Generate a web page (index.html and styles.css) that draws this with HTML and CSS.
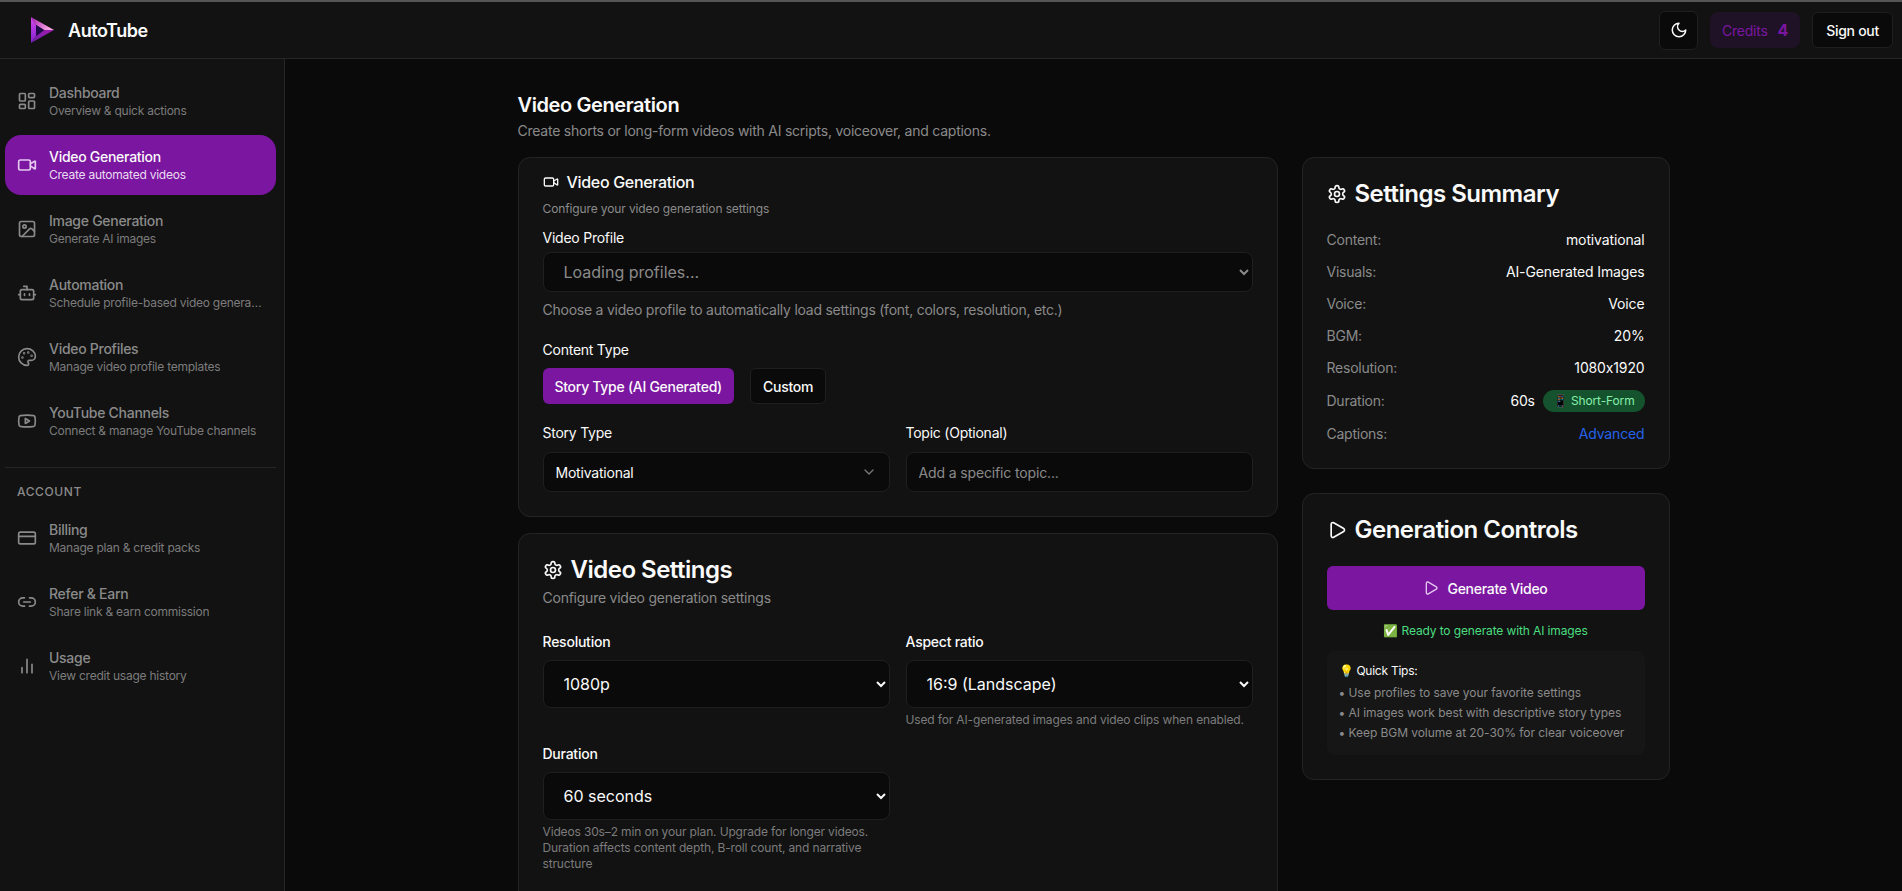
FILE: index.html
```html
<!DOCTYPE html>
<html lang="en">
<head>
<meta charset="utf-8">
<title>AutoTube</title>
<link rel="stylesheet" href="styles.css">
</head>
<body>
<svg class="sprite" aria-hidden="true">
  <symbol id="i-dash" viewBox="0 0 24 24"><rect x="3" y="3" width="7" height="9" rx="1"/><rect x="14" y="3" width="7" height="5" rx="1"/><rect x="14" y="12" width="7" height="9" rx="1"/><rect x="3" y="16" width="7" height="5" rx="1"/></symbol>
  <symbol id="i-video" viewBox="0 0 24 24"><path d="m16 13 5.223 3.482a.5.5 0 0 0 .777-.416V7.87a.5.5 0 0 0-.752-.432L16 10.5"/><rect x="2" y="6" width="14" height="12" rx="2"/></symbol>
  <symbol id="i-image" viewBox="0 0 24 24"><rect x="3" y="3" width="18" height="18" rx="2"/><circle cx="9" cy="9" r="2"/><path d="m21 15-3.086-3.086a2 2 0 0 0-2.828 0L6 21"/></symbol>
  <symbol id="i-bot" viewBox="0 0 24 24"><path d="M12 8V4H8"/><rect x="4" y="8" width="16" height="12" rx="2"/><path d="M2 14h2M20 14h2M15 13v2M9 13v2"/></symbol>
  <symbol id="i-palette" viewBox="0 0 24 24"><path d="M12 22a1 1 0 0 1 0-20 10 9 0 0 1 10 9 5 5 0 0 1-5 5h-2.25a1.75 1.75 0 0 0-1.4 2.8l.3.4a1.75 1.75 0 0 1-1.4 2.8z"/><circle cx="13.5" cy="6.5" r=".5"/><circle cx="17.5" cy="10.5" r=".5"/><circle cx="6.5" cy="12.5" r=".5"/><circle cx="8.5" cy="7.5" r=".5"/></symbol>
  <symbol id="i-yt" viewBox="0 0 24 24"><path d="M2.5 17a24.12 24.12 0 0 1 0-10 2 2 0 0 1 1.4-1.4 49.56 49.56 0 0 1 16.2 0A2 2 0 0 1 21.5 7a24.12 24.12 0 0 1 0 10 2 2 0 0 1-1.4 1.4 49.55 49.55 0 0 1-16.2 0A2 2 0 0 1 2.5 17"/><path d="m10 15 5-3-5-3z"/></symbol>
  <symbol id="i-card" viewBox="0 0 24 24"><rect x="2" y="5" width="20" height="14" rx="2"/><path d="M2 10h20"/></symbol>
  <symbol id="i-link" viewBox="0 0 24 24"><path d="M9 17H7A5 5 0 0 1 7 7h2"/><path d="M15 7h2a5 5 0 1 1 0 10h-2"/><path d="M8 12h8"/></symbol>
  <symbol id="i-chart" viewBox="0 0 24 24"><path d="M18 20V10M12 20V4M6 20v-6"/></symbol>
  <symbol id="i-moon" viewBox="0 0 24 24"><path d="M12 3a6 6 0 0 0 9 9 9 9 0 1 1-9-9Z"/></symbol>
  <symbol id="i-gear" viewBox="0 0 24 24"><path d="M12.22 2h-.44a2 2 0 0 0-2 2v.18a2 2 0 0 1-1 1.73l-.43.25a2 2 0 0 1-2 0l-.15-.08a2 2 0 0 0-2.73.73l-.22.38a2 2 0 0 0 .73 2.73l.15.1a2 2 0 0 1 1 1.72v.51a2 2 0 0 1-1 1.74l-.15.09a2 2 0 0 0-.73 2.73l.22.38a2 2 0 0 0 2.73.73l.15-.08a2 2 0 0 1 2 0l.43.25a2 2 0 0 1 1 1.73V20a2 2 0 0 0 2 2h.44a2 2 0 0 0 2-2v-.18a2 2 0 0 1 1-1.73l.43-.25a2 2 0 0 1 2 0l.15.08a2 2 0 0 0 2.73-.73l.22-.39a2 2 0 0 0-.73-2.73l-.15-.08a2 2 0 0 1-1-1.74v-.5a2 2 0 0 1 1-1.74l.15-.09a2 2 0 0 0 .73-2.73l-.22-.38a2 2 0 0 0-2.73-.73l-.15.08a2 2 0 0 1-2 0l-.43-.25a2 2 0 0 1-1-1.73V4a2 2 0 0 0-2-2z"/><circle cx="12" cy="12" r="3"/></symbol>
  <symbol id="i-play" viewBox="0 0 24 24"><path d="M5 5a2 2 0 0 1 3.008-1.728l11.997 6.998a2 2 0 0 1 .003 3.458l-12 7A2 2 0 0 1 5 19z"/></symbol>
  <symbol id="i-chev" viewBox="0 0 24 24"><path d="m6 9 6 6 6-6"/></symbol>
</svg>
<div class="topline"></div>
<header class="topbar">
  <div class="brand">
    <svg class="logo" viewBox="0 0 25 26">
      <defs>
        <linearGradient id="lgTop" x1="0" y1="0" x2="1" y2="0.4"><stop offset="0" stop-color="#a21caf"/><stop offset="1" stop-color="#f9a8e4"/></linearGradient>
        <linearGradient id="lgLeft" x1="0" y1="0" x2="0" y2="1"><stop offset="0" stop-color="#d946ef"/><stop offset="1" stop-color="#7e22ce"/></linearGradient>
        <linearGradient id="lgBot" x1="0" y1="1" x2="1" y2="0"><stop offset="0" stop-color="#6b21a8"/><stop offset="1" stop-color="#a21caf"/></linearGradient>
      </defs>
      <path d="M1 0 24 13 14 13 6 8Z" fill="url(#lgTop)"/>
      <path d="M1 0 6 8 6 19 1 26Z" fill="url(#lgLeft)"/>
      <path d="M1 26 6 19 14 13 24 13Z" fill="url(#lgBot)"/>
      <path d="M6 8 14 13 6 19Z" fill="#1e0a4a"/>
    </svg>
    <span class="brand-name">AutoTube</span>
  </div>
  <div class="top-actions">
    <button class="icon-btn"><svg class="ic ic-18"><use href="#i-moon"/></svg></button>
    <div class="credits"><span>Credits</span><b>4</b></div>
    <button class="signout">Sign out</button>
  </div>
</header>
<div class="shell">
  <aside class="sidebar">
    <nav class="nav">
      <a class="nav-item"><svg class="ic"><use href="#i-dash"/></svg><span class="nav-text"><span class="nav-title">Dashboard</span><span class="nav-sub">Overview &amp; quick actions</span></span></a>
      <a class="nav-item active"><svg class="ic"><use href="#i-video"/></svg><span class="nav-text"><span class="nav-title">Video Generation</span><span class="nav-sub">Create automated videos</span></span></a>
      <a class="nav-item"><svg class="ic"><use href="#i-image"/></svg><span class="nav-text"><span class="nav-title">Image Generation</span><span class="nav-sub">Generate AI images</span></span></a>
      <a class="nav-item"><svg class="ic"><use href="#i-bot"/></svg><span class="nav-text"><span class="nav-title">Automation</span><span class="nav-sub">Schedule profile-based video generation</span></span></a>
      <a class="nav-item"><svg class="ic"><use href="#i-palette"/></svg><span class="nav-text"><span class="nav-title">Video Profiles</span><span class="nav-sub">Manage video profile templates</span></span></a>
      <a class="nav-item"><svg class="ic"><use href="#i-yt"/></svg><span class="nav-text"><span class="nav-title">YouTube Channels</span><span class="nav-sub">Connect &amp; manage YouTube channels</span></span></a>
    </nav>
    <div class="nav-section">
      <div class="nav-heading">ACCOUNT</div>
      <nav class="nav">
        <a class="nav-item"><svg class="ic"><use href="#i-card"/></svg><span class="nav-text"><span class="nav-title">Billing</span><span class="nav-sub">Manage plan &amp; credit packs</span></span></a>
        <a class="nav-item"><svg class="ic"><use href="#i-link"/></svg><span class="nav-text"><span class="nav-title">Refer &amp; Earn</span><span class="nav-sub">Share link &amp; earn commission</span></span></a>
        <a class="nav-item"><svg class="ic"><use href="#i-chart"/></svg><span class="nav-text"><span class="nav-title">Usage</span><span class="nav-sub">View credit usage history</span></span></a>
      </nav>
    </div>
  </aside>
  <main class="main">
    <div class="container">
      <h1 class="page-title">Video Generation</h1>
      <p class="page-sub">Create shorts or long-form videos with AI scripts, voiceover, and captions.</p>
      <div class="columns">
        <div class="col-left">
          <section class="card card-compact">
            <h2 class="small-title"><svg class="ic ic-16"><use href="#i-video"/></svg>Video Generation</h2>
            <p class="small-sub">Configure your video generation settings</p>
            <div class="field first">
              <label class="label">Video Profile</label>
              <select class="native sm muted"><option>Loading profiles...</option></select>
              <p class="help-14">Choose a video profile to automatically load settings (font, colors, resolution, etc.)</p>
            </div>
            <div class="field ct">
              <label class="label">Content Type</label>
              <div class="btn-row">
                <button class="btn primary">Story Type (AI Generated)</button>
                <button class="btn dark">Custom</button>
              </div>
            </div>
            <div class="grid-2 g-story">
              <div class="field">
                <label class="label gap9">Story Type</label>
                <button class="combo">Motivational<svg class="ic ic-16 dim"><use href="#i-chev"/></svg></button>
              </div>
              <div class="field">
                <label class="label gap9">Topic (Optional)</label>
                <input class="input" placeholder="Add a specific topic...">
              </div>
            </div>
          </section>
          <section class="card">
            <h2 class="big-title"><svg class="ic"><use href="#i-gear"/></svg>Video Settings</h2>
            <p class="big-sub">Configure video generation settings</p>
            <div class="grid-2 g-settings">
              <div class="field">
                <label class="label gap8 strong">Resolution</label>
                <select class="native"><option>1080p</option></select>
              </div>
              <div class="field">
                <label class="label gap8 strong">Aspect ratio</label>
                <select class="native"><option>16:9 (Landscape)</option></select>
                <p class="help">Used for AI-generated images and video clips when enabled.</p>
              </div>
              <div class="field">
                <label class="label gap8 strong">Duration</label>
                <select class="native"><option>60 seconds</option></select>
                <p class="help">Videos 30s–2 min on your plan. Upgrade for longer videos. Duration affects content depth, B-roll count, and narrative structure</p>
              </div>
            </div>
            <div class="next-box"></div>
          </section>
        </div>
        <div class="col-right">
          <section class="card">
            <h2 class="big-title"><svg class="ic"><use href="#i-gear"/></svg>Settings Summary</h2>
            <dl class="summary">
              <div class="row"><dt>Content:</dt><dd>motivational</dd></div>
              <div class="row"><dt>Visuals:</dt><dd>AI-Generated Images</dd></div>
              <div class="row"><dt>Voice:</dt><dd>Voice</dd></div>
              <div class="row"><dt>BGM:</dt><dd>20%</dd></div>
              <div class="row"><dt>Resolution:</dt><dd>1080x1920</dd></div>
              <div class="row"><dt>Duration:</dt><dd class="dur">60s<span class="badge">📱 Short-Form</span></dd></div>
              <div class="row"><dt>Captions:</dt><dd class="blue">Advanced</dd></div>
            </dl>
          </section>
          <section class="card">
            <h2 class="big-title"><svg class="ic"><use href="#i-play"/></svg>Generation Controls</h2>
            <button class="generate"><svg class="ic ic-16"><use href="#i-play"/></svg>Generate Video</button>
            <p class="ready">✅ Ready to generate with AI images</p>
            <div class="tips">
              <div class="tips-title">💡 Quick Tips:</div>
              <div class="tip">• Use profiles to save your favorite settings</div>
              <div class="tip">• AI images work best with descriptive story types</div>
              <div class="tip">• Keep BGM volume at 20-30% for clear voiceover</div>
            </div>
          </section>
        </div>
      </div>
    </div>
  </main>
</div>
</body>
</html>
```
FILE: styles.css
```css
* { box-sizing: border-box; }
html, body { margin: 0; height: 100%; overflow: hidden; }
body {
  background: #0a0a0a;
  color: #fafafa;
  font-family: Inter, "Noto Sans", sans-serif;
  font-feature-settings: "calt" 0;
  letter-spacing: -0.015em;
  color-scheme: dark;
  display: flex;
  flex-direction: column;
}
h1, h2, p, dl, dd { margin: 0; }
.sprite { display: none; }
.ic {
  width: 20px; height: 20px; flex: none;
  fill: none; stroke: currentColor; stroke-width: 2;
  stroke-linecap: round; stroke-linejoin: round;
}
.ic-18 { width: 18px; height: 18px; }
.ic-16 { width: 16px; height: 16px; }
.dim { color: #777; }

.topline { height: 2px; background: #555; flex: none; }
.topbar {
  flex: none; height: 57px;
  background: #121212;
  border-bottom: 1px solid #262626;
  display: flex; align-items: center; justify-content: space-between;
  padding: 0 9px 0 30px;
}
.brand { display: flex; align-items: center; gap: 13px; }
.logo { width: 25px; height: 26px; }
.brand-name { font-size: 18px; font-weight: 600; letter-spacing: -0.025em; }
.top-actions { display: flex; align-items: center; gap: 12px; }
.icon-btn {
  width: 39px; height: 39px; display: flex; align-items: center; justify-content: center;
  background: #0a0a0a; color: #fafafa;
  border: 1px solid #1f1f1f; border-radius: 6px;
}
.credits {
  height: 36px; padding: 0 12px; display: flex; align-items: center; gap: 10px;
  background: #1f1226; color: #7a16a0; border-radius: 8px; font-size: 14px;
}
.credits b { font-size: 16px; font-weight: 700; }
.signout {
  height: 36px; padding: 0 13px;
  background: #0a0a0a; color: #fafafa;
  border: 1px solid #1f1f1f; border-radius: 6px;
  font: 500 14px Inter, sans-serif; letter-spacing: -0.02em;
}

.shell { flex: 1; min-height: 0; display: flex; }
.sidebar {
  flex: none; width: 285px;
  background: #121212;
  border-right: 1px solid #262626;
  padding: 12px 8px 0 5px;
}
.nav { display: flex; flex-direction: column; gap: 4px; }
.nav-item {
  height: 60px; padding: 0 12px; display: flex; align-items: center; gap: 12px;
  border-radius: 16px; color: #8a8a8a;
}
.nav-item.active { background: #7a16a0; color: #fafafa; }
.nav-item.active .ic { color: #e5c8ef; }
.nav-text { min-width: 0; display: flex; flex-direction: column; }
.nav-title { font-size: 14px; line-height: 20px; font-weight: 500; letter-spacing: -0.02em; }
.nav-sub {
  font-size: 12px; line-height: 16px; color: #7c7c7c;
  white-space: nowrap; overflow: hidden; text-overflow: ellipsis;
}
.active .nav-sub { color: #eadcf0; }
.nav-section { margin-top: 16px; border-top: 1px solid #262626; padding-top: 16px; }
.nav-heading {
  font-size: 12px; line-height: 16px; font-weight: 500; letter-spacing: 0.6px;
  color: #8a8a8a; padding-left: 12px; margin-bottom: 8px;
}

.main { flex: 1; min-width: 0; overflow: hidden; }
.container { width: 1152px; margin: 0 auto; padding-top: 32px; }
.page-title { font-size: 20px; line-height: 28px; font-weight: 600; letter-spacing: -0.02em; }
.page-sub { font-size: 14px; line-height: 20px; color: #8a8a8a; margin-top: 2px; }
.columns { display: grid; grid-template-columns: 760px 368px; gap: 24px; margin-top: 16px; }
.col-left, .col-right { display: flex; flex-direction: column; }
.col-left { gap: 16px; }
.col-right { gap: 24px; }
.card {
  background: #121212;
  border: 1px solid #242424;
  border-radius: 12px;
  padding: 20px 24px 24px;
}
.card-compact { padding-top: 12px; }

.small-title { display: flex; align-items: center; gap: 8px; font-size: 16px; line-height: 24px; font-weight: 500; letter-spacing: -0.02em; }
.small-sub { font-size: 12px; line-height: 16px; color: #8a8a8a; margin-top: 7px; letter-spacing: -0.01em; }
.big-title { display: flex; align-items: center; gap: 8px; font-size: 24px; line-height: 32px; font-weight: 600; letter-spacing: -0.5px; }
.big-sub { font-size: 14px; line-height: 20px; color: #8a8a8a; margin-top: 2px; }

.field { display: flex; flex-direction: column; min-width: 0; }
.label { font-size: 14px; line-height: 20px; font-weight: 400; margin-bottom: 4px; }
.label.gap8 { margin-bottom: 8px; }
.label.gap9 { margin-bottom: 9px; }
.label.strong { font-weight: 500; }
.field.first { margin-top: 11px; }
.ct { margin-top: 20px; }
.native {
  width: 100%; height: 48px; padding: 0 16px;
  background: #0a0a0a; color: #fafafa;
  border: 1px solid #1f1f1f; border-radius: 8px;
  font: 400 16px Inter, sans-serif;
}
.native.sm { height: 40px; }
.native.muted { color: #8a8a8a; }
.help-14 { font-size: 14px; line-height: 20px; color: #8a8a8a; margin-top: 8px; }
.help { font-size: 12px; line-height: 16px; color: #7c7c7c; margin-top: 4px; letter-spacing: -0.012em; }
.btn-row { display: flex; gap: 16px; margin-top: 4px; }
.btn { height: 36px; padding: 0 12px; border-radius: 6px; font: 500 14px Inter, sans-serif; letter-spacing: -0.02em; color: #fafafa; }
.btn.primary { background: #7a16a0; border: 0; }
.btn.dark { background: #0a0a0a; border: 1px solid #1f1f1f; }
.grid-2 { display: grid; grid-template-columns: 1fr 1fr; gap: 16px; }
.g-story { margin-top: 19px; }
.g-settings { margin-top: 24px; row-gap: 16px; }
.combo {
  height: 40px; width: 100%; padding: 0 12px;
  display: flex; align-items: center; justify-content: space-between;
  background: #0a0a0a; color: #fafafa;
  border: 1px solid #1f1f1f; border-radius: 8px;
  font: 400 14px Inter, sans-serif; letter-spacing: -0.015em;
}
.input {
  height: 40px; width: 100%; padding: 0 12px;
  background: #0a0a0a; color: #fafafa;
  border: 1px solid #1f1f1f; border-radius: 8px;
  font: 400 14px Inter, sans-serif; letter-spacing: -0.01em;
}
.input::placeholder { color: #8a8a8a; opacity: 1; }
.next-box { height: 48px; margin-top: 24px; border: 1px solid #1f1f1f; border-radius: 8px; background: #0a0a0a; }

.summary { margin-top: 20px; display: flex; flex-direction: column; gap: 12px; }
.row { display: flex; align-items: center; justify-content: space-between; font-size: 14px; line-height: 20px; }
.row dt { color: #8a8a8a; }
.row dd { font-weight: 400; letter-spacing: -0.01em; }
.dur { display: flex; align-items: center; gap: 8px; }
.badge {
  display: inline-flex; align-items: center; height: 22px; padding: 0 10px;
  background: #14532d; color: #86efac; border-radius: 999px;
  font-size: 12px; font-weight: 400;
}
.blue { color: #2563eb; }
.generate {
  width: 100%; height: 44px; margin-top: 20px;
  display: flex; align-items: center; justify-content: center; gap: 8px;
  background: #7a16a0; color: #fafafa; border: 0; border-radius: 6px;
  font: 500 14px Inter, sans-serif; letter-spacing: -0.02em;
}
.generate .ic { color: #e5c8ef; }
.ready { text-align: center; font-size: 12px; line-height: 16px; color: #4ade80; margin-top: 13px; letter-spacing: -0.01em; }
.tips { background: #161616; border-radius: 8px; padding: 12px; margin-top: 12px; }
.tips-title { font-size: 12px; line-height: 16px; font-weight: 400; margin-bottom: 4px; }
.tip { font-size: 12px; line-height: 20px; color: #8a8a8a; letter-spacing: -0.005em; }
```
